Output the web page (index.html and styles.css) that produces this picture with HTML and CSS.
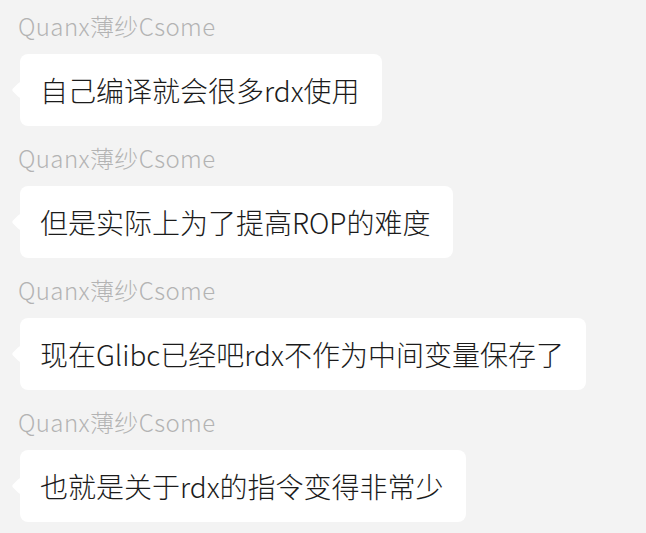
FILE: index.html
```html
<!DOCTYPE html>
<html lang="zh-CN">
<head>
<meta charset="utf-8">
<link rel="stylesheet" href="styles.css">
</head>
<body>
<div class="chat">
  <div class="msg">
    <div class="name">Quanx薄纱Csome</div>
    <div class="bubble">自己编译就会很多rdx使用</div>
  </div>
  <div class="msg">
    <div class="name">Quanx薄纱Csome</div>
    <div class="bubble">但是实际上为了提高ROP的难度</div>
  </div>
  <div class="msg">
    <div class="name">Quanx薄纱Csome</div>
    <div class="bubble">现在Glibc已经吧rdx不作为中间变量保存了</div>
  </div>
  <div class="msg">
    <div class="name">Quanx薄纱Csome</div>
    <div class="bubble">也就是关于rdx的指令变得非常少</div>
  </div>
</div>
</body>
</html>
```
FILE: styles.css
```css
html, body {
  margin: 0;
  padding: 0;
  background: #f3f3f3;
}
body {
  font-family: "Noto Sans CJK SC", "Noto Sans", sans-serif;
  font-weight: 300;
  width: 646px;
  height: 533px;
  overflow: hidden;
}
.chat {
  display: flex;
  flex-direction: column;
  align-items: flex-start;
  padding-top: 10px;
}
.msg {
  display: flex;
  flex-direction: column;
  align-items: flex-start;
  gap: 12px;
  margin-bottom: 16px;
}
.name {
  font-size: 24px;
  line-height: 32px;
  color: #b3b3b3;
  padding-left: 18px;
  letter-spacing: 0.4px;
}
.bubble {
  position: relative;
  margin-left: 20px;
  height: 72px;
  display: flex;
  align-items: center;
  padding: 0 22px 0 20px;
  background: #ffffff;
  border-radius: 8px;
  font-size: 28px;
  color: #1b1b1b;
  white-space: nowrap;
}
.bubble::before {
  content: "";
  position: absolute;
  left: -6px;
  top: 50%;
  width: 12px;
  height: 12px;
  margin-top: -6px;
  background: #ffffff;
  border-radius: 2px;
  transform: rotate(45deg);
}
```
